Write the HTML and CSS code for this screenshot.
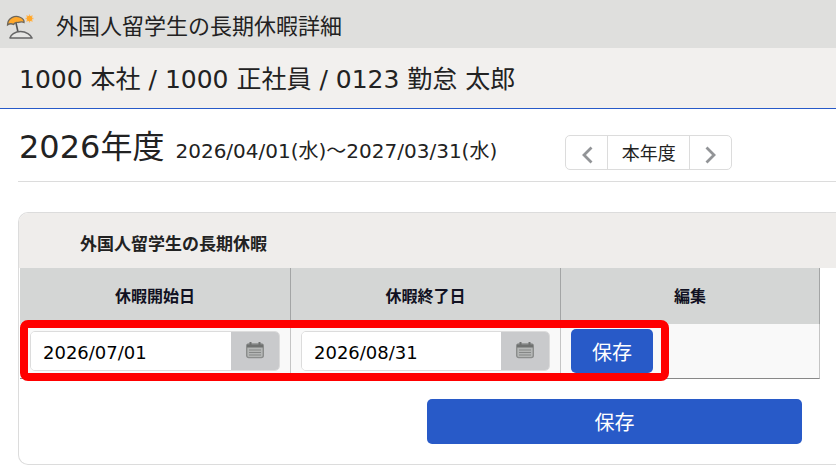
FILE: index.html
```
<!DOCTYPE html>
<html lang="ja">
<head>
    <meta charset="UTF-8">
    <meta name="viewport" content="width=device-width, initial-scale=1.0">
    <title>外国人留学生の長期休暇詳細</title>
    <link rel="stylesheet" href="styles.css">
</head>
<body>
    <header class="page-header">
        <svg class="page-icon" width="28" height="26" viewBox="0 0 28 26" aria-hidden="true">
            <path d="M1.500 11C1.500 4 9 1 13.500 3C17 4.500 18.500 6.500 18 8.500C15.500 7 14 8.500 12 8.500C10.500 8 9 8.500 7.500 10.500C5 9 3.500 9.500 1.500 11Z" fill="#ffa82b" stroke="#6e675b" stroke-width="1.300"/>
            <path d="M10 9L12 18" fill="none" stroke="#555" stroke-width="1.600"/>
            <path d="M4 24C4.500 21 9 17.500 14.500 17.500C20 17.500 25 21 26 24Z" fill="#e6e6e4" stroke="#666" stroke-width="1.600" stroke-linejoin="round"/>
            <path d="M23.500 0.500V8.500M19.500 4.500H27.500M20.500 1.500L26.500 7.500M26.500 1.500L20.500 7.500" stroke="#ffb95c" stroke-width="1.300"/>
            <circle cx="23.500" cy="4.500" r="2.700" fill="#ffa82b"/>
        </svg>
        <h1 class="page-title">外国人留学生の長期休暇詳細</h1>
    </header>

    <div class="employee">1000 本社 / 1000 正社員 / 0123 勤怠 太郎</div>

    <main class="content">
        <div class="period">
            <h2 class="period-year">2026年度</h2>
            <span class="period-range">2026/04/01(水)～2027/03/31(水)</span>
            <div class="period-nav">
                <button type="button" class="nav-button" aria-label="前年度">
                    <svg width="12" height="18" viewBox="0 0 12 18"><path d="M10.500 1.500L3 9L10.500 16.500" fill="none" stroke="#929497" stroke-width="2.800"/></svg>
                </button>
                <button type="button" class="nav-button nav-current">本年度</button>
                <button type="button" class="nav-button" aria-label="翌年度">
                    <svg width="12" height="18" viewBox="0 0 12 18"><path d="M1.500 1.500L9 9L1.500 16.500" fill="none" stroke="#929497" stroke-width="2.800"/></svg>
                </button>
            </div>
        </div>

        <form class="panel">
            <h3 class="panel-title">外国人留学生の長期休暇</h3>
            <div class="table-wrap">
                <table class="vacation-table">
                    <thead>
                        <tr>
                            <th class="col-start" id="start-label">休暇開始日</th>
                            <th class="col-end" id="end-label">休暇終了日</th>
                            <th>編集</th>
                        </tr>
                    </thead>
                    <tbody>
                        <tr>
                            <td>
                                <div class="date-field">
                                    <input type="text" class="date-input" value="2026/07/01" aria-labelledby="start-label">
                                    <button type="button" class="date-button" aria-label="カレンダー">
                                        <svg width="18" height="18" viewBox="0 0 18 18"><rect x="0.700" y="3" width="16.600" height="13.600" rx="2" fill="#b4b6b5" stroke="#8b8d8c" stroke-width="1.400"/><path d="M1 3.500H17V6.500H1Z" fill="#6f7170"/><path d="M4.500 1V4M13.500 1V4" stroke="#6f7170" stroke-width="2"/><path d="M3 9H15M3 11.500H15M3 14H15" stroke="#858786"/></svg>
                                    </button>
                                </div>
                            </td>
                            <td>
                                <div class="date-field">
                                    <input type="text" class="date-input" value="2026/08/31" aria-labelledby="end-label">
                                    <button type="button" class="date-button" aria-label="カレンダー">
                                        <svg width="18" height="18" viewBox="0 0 18 18"><rect x="0.700" y="3" width="16.600" height="13.600" rx="2" fill="#b4b6b5" stroke="#8b8d8c" stroke-width="1.400"/><path d="M1 3.500H17V6.500H1Z" fill="#6f7170"/><path d="M4.500 1V4M13.500 1V4" stroke="#6f7170" stroke-width="2"/><path d="M3 9H15M3 11.500H15M3 14H15" stroke="#858786"/></svg>
                                    </button>
                                </div>
                            </td>
                            <td><button type="button" class="button row-save">保存</button></td>
                        </tr>
                    </tbody>
                </table>
                <div class="highlight"></div>
            </div>
            <div class="actions">
                <button type="submit" class="button form-save">保存</button>
            </div>
        </form>
    </main>
</body>
</html>
```
FILE: styles.css
```
* {
    box-sizing: border-box;
}

body {
    margin: 0;
    background: #fff;
    color: #222;
    font-family: "DejaVu Sans", "Noto Sans CJK JP", sans-serif;
    overflow-x: hidden;
}

h1, h2, h3 {
    margin: 0;
    font-weight: 400;
}

button, input {
    font-family: inherit;
    margin: 0;
}

svg {
    display: block;
}

.page-header {
    display: flex;
    align-items: center;
    gap: 22px;
    height: 48px;
    padding: 6px 6px 0;
    background: #dfdfdd;
}

.page-title {
    font-size: 22px;
    line-height: 32px;
}

.employee {
    padding: 14px 19px 10px;
    border-bottom: 1px solid #285ac8;
    background: #f2f0ee;
    font-size: 25px;
    line-height: 36px;
}

.content {
    padding-left: 18px;
}

.period {
    display: flex;
    align-items: baseline;
    height: 73px;
    padding: 14px 0 0 1px;
    border-bottom: 1px solid #dcdcdc;
}

.period-year {
    font-size: 32px;
    line-height: 48px;
}

.period-range {
    margin: 0 68px 0 11px;
    font-size: 20px;
}

.period-nav {
    display: flex;
    align-self: flex-start;
    height: 35px;
    margin-top: 12px;
    border: 1px solid #dcdcdc;
    border-radius: 5px;
}

.nav-button {
    display: flex;
    align-items: center;
    justify-content: center;
    width: 41px;
    padding: 4px 0 0;
    border: 0;
    background: none;
    color: #222;
    font-size: 18px;
    cursor: pointer;
}

.nav-current {
    width: 83px;
    padding: 0 0 2px;
    border: solid #dcdcdc;
    border-width: 0 1px;
}

.panel {
    margin-top: 30px;
    border: 1px solid #dcdcdc;
    border-right: 0;
    border-radius: 10px 0 0 10px;
    overflow: hidden;
}

.panel-title {
    padding: 19px 61px 12px;
    background: #efedeb;
    font-size: 17px;
    font-weight: 700;
    line-height: 24px;
}

.table-wrap {
    position: relative;
    margin: 0 16px 0 1px;
}

.vacation-table {
    width: 100%;
    border-collapse: separate;
    border-spacing: 0;
    table-layout: fixed;
}

.vacation-table th {
    height: 56px;
    padding: 0 0 2px;
    border-right: 1px solid #a3a5a5;
    background: #d4d6d5;
    color: #112;
    font-size: 16px;
}

.col-start {
    width: 271px;
}

.col-end {
    width: 270px;
}

.vacation-table td {
    padding: 5px 10px;
    border-right: 1px solid #c5c5c5;
    border-bottom: 1px solid #888;
    background: #f9f9f9;
}

.date-field {
    display: flex;
    height: 40px;
    border: 1px solid #dcdcdc;
    border-radius: 5px;
    overflow: hidden;
}

.date-input {
    flex: 1;
    min-width: 0;
    padding: 2px 12px 0;
    border: 0;
    background: #fff;
    color: #000;
    font-size: 18px;
}

.date-button {
    display: flex;
    justify-content: center;
    width: 48px;
    padding: 9px 0 0;
    border: 0;
    background: #c9cacc;
    cursor: pointer;
}

.button {
    display: block;
    height: 44px;
    padding: 0;
    border: 0;
    border-radius: 5px;
    background: #285ac8;
    color: #fff;
    font-size: 20px;
    cursor: pointer;
}

.row-save {
    width: 82px;
}

/* red frame around the row being edited */
.highlight {
    position: absolute;
    left: 0;
    bottom: -2px;
    width: 649px;
    height: 61px;
    border: 8px solid #f00;
    border-radius: 8px;
    pointer-events: none;
}

.actions {
    display: flex;
    justify-content: flex-end;
    padding: 20px 34px;
}

.form-save {
    width: 375px;
    height: 45px;
}
```
